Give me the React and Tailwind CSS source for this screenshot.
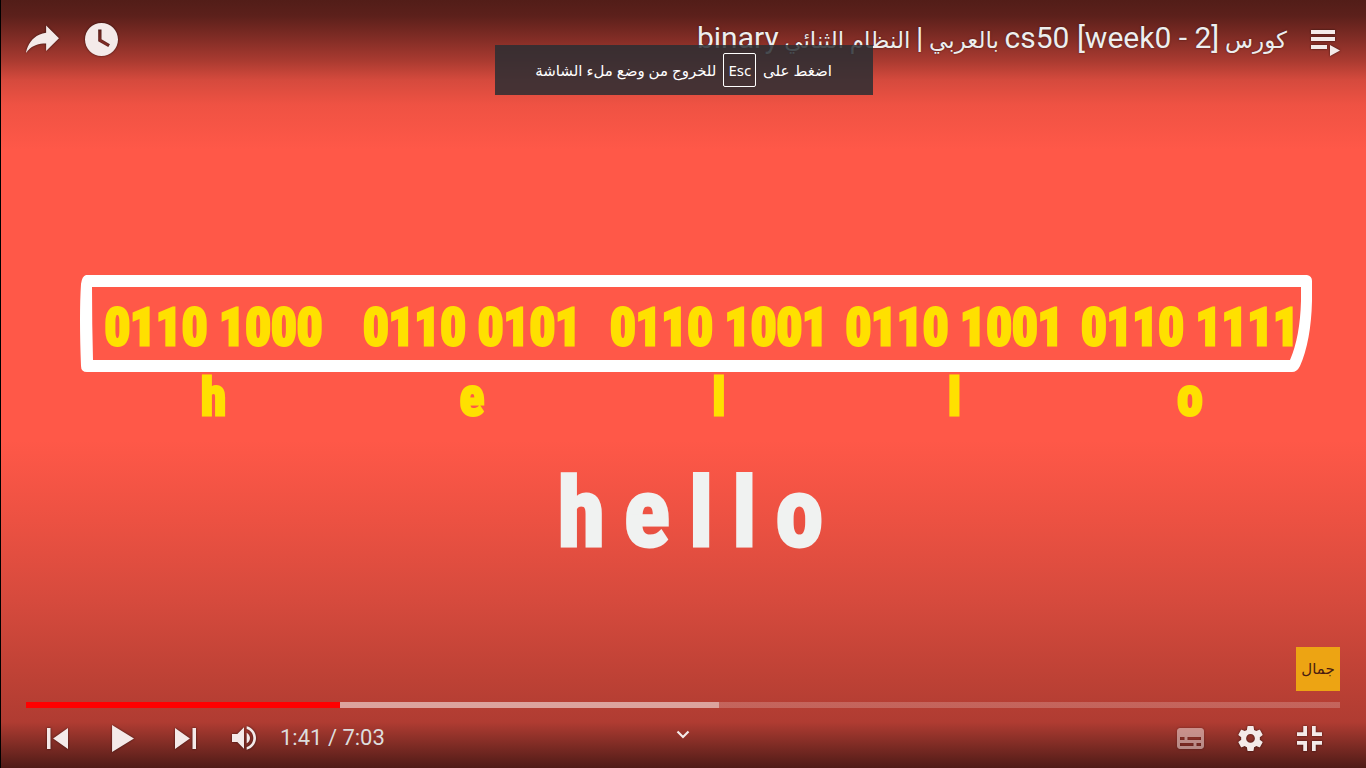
import React from "react";

const groups = [
  { code: "0110 1000", letter: "h" },
  { code: "0110 0101", letter: "e" },
  { code: "0110 1001", letter: "l" },
  { code: "0110 1001", letter: "l" },
  { code: "0110 1111", letter: "o" },
];

const player = { elapsed: 101, duration: 423, buffered: 223 };

const shadow = "drop-shadow-[0_0_1px_rgba(0,0,0,0.6)]";

function IconButton({ label, viewBox, className, children }) {
  return (
    <button type="button" aria-label={label} className="flex shrink-0 items-center justify-center">
      <svg viewBox={viewBox} className={`overflow-visible ${shadow} ${className}`} fill="#f4eae9" aria-hidden="true">
        {children}
      </svg>
    </button>
  );
}

function TopBar() {
  return (
    <header className="flex h-[78px] items-center justify-between pr-[26px] pl-[25px]">
      <div className="flex items-center gap-[26px]">
        <IconButton label="مشاركة" viewBox="8 9.5 20 17" className="h-7 w-[33px]">
          <path d="m 20.20,14.19 0,-4.45 7.79,7.79 -7.79,7.79 0,-4.56 C 16.27,20.69 12.10,21.81 9.34,24.76 8.80,25.13 7.60,27.29 8.12,25.65 9.08,21.32 11.80,17.18 15.98,15.38 c 1.33,-0.60 2.76,-0.98 4.21,-1.19 z" />
        </IconButton>
        <IconButton label="المشاهدة لاحقًا" viewBox="8 8 20 20" className="size-[33px]">
          <path d="M18,8 C12.47,8 8,12.47 8,18 C8,23.52 12.47,28 18,28 C23.52,28 28,23.52 28,18 C28,12.47 23.52,8 18,8 Z M16,19.02 L16,12 L18,12 L18,17.86 L23.10,20.81 L22.10,22.54 L16,19.02 Z" />
        </IconButton>
      </div>
      <div className="flex items-center gap-6">
        <h1 dir="rtl" className="font-[Roboto,'DejaVu_Sans',sans-serif] text-[23px] leading-[38px] whitespace-nowrap text-[#eeeeee] [text-shadow:0_0_2px_rgba(0,0,0,0.5)]">
          كورس <span className="text-[30px]">cs50 [week0 - 2]</span> بالعربي <span className="text-[30px]">|</span> النظام
          الثنائي <span className="text-[30px]">binary</span>
        </h1>
        <IconButton label="قائمة التشغيل" viewBox="0 0 29 26" className="mt-2 h-[26px] w-[29px]">
          <path d="M0 0h24v4H0z M0 7h24v4H0z M0 15h16v4H0z M19 15l10 5.500l-10 5.500z" />
        </IconButton>
      </div>
    </header>
  );
}

function FullscreenHint() {
  return (
    <div
      dir="rtl"
      className="absolute top-[45px] left-1/2 flex h-[50px] w-[378px] -translate-x-1/2 items-center justify-center gap-[7px] bg-[rgba(42,46,50,0.85)] font-['Noto_Sans','DejaVu_Sans',sans-serif] text-[15px] whitespace-nowrap text-white"
    >
      <span>اضغط على</span>
      <kbd className="flex h-[34px] items-center rounded-xs border border-white px-1 font-['Noto_Sans',sans-serif] text-[15px]">Esc</kbd>
      <span>للخروج من وضع ملء الشاشة</span>
    </div>
  );
}

function Scene() {
  return (
    <main className="flex-1 pt-[197px] font-['Roboto_Condensed','DejaVu_Sans_Condensed',sans-serif] font-bold">
      <div className="relative mr-[54px] ml-[79px]">
        <svg className="absolute top-0 left-0 h-[98px] w-full" viewBox="0 0 1232 98" preserveAspectRatio="none" aria-hidden="true">
          <path
            fillRule="evenodd"
            fill="#ffffff"
            d="M6 0 Q2 1 1 9 Q-1 40 1 91 Q1 97 7 97 H1212 Q1217 97 1220 91 Q1231 66 1232 26 V6 Q1232 1 1227 0 Z M12 12 H1221 V26 Q1220 62 1210 85 H13 Q12 50 12 12 Z"
          />
        </svg>
        <ul className="relative grid grid-cols-[267fr_250fr_244fr_227fr_244fr] text-[51px] leading-[70px] whitespace-nowrap text-[#ffe000] [-webkit-text-stroke:3px_#ffe000]">
          {groups.map((g, i) => (
            <li key={i} className="flex min-w-0 flex-col items-center pt-[18px]">
              <span>{g.code}</span>
              <span>{g.letter}</span>
            </li>
          ))}
        </ul>
      </div>
      <p aria-label="hello" className="mt-5 flex justify-center gap-[19px] pl-[14px] text-[96px] leading-[120px] text-[#f0f2f1] [-webkit-text-stroke:3px_#f0f2f1]">
        {"hello".split("").map((c, i) => (
          <span key={i}>{c}</span>
        ))}
      </p>
    </main>
  );
}

function Controls() {
  const played = (player.elapsed / player.duration) * 100;
  const loaded = (player.buffered / player.duration) * 100;
  return (
    <footer className="flex flex-col pr-[26px] pl-[25px]">
      <a href="#channel" aria-label="جمال" className="flex size-11 items-center justify-center self-end bg-[#eda413] font-['DejaVu_Sans',sans-serif] text-[15px] text-[#4a1c10]">
        جمال
      </a>
      <input
        type="range"
        aria-label="شريط التقدم"
        min="0"
        max={player.duration}
        defaultValue={player.elapsed}
        className="mt-[11px] block h-[6px] w-full appearance-none [&::-webkit-slider-thumb]:size-1 [&::-webkit-slider-thumb]:appearance-none [&::-webkit-slider-thumb]:opacity-0"
        style={{
          background: `linear-gradient(to right, #ff0000 ${played}%, rgba(255,255,255,0.52) ${played}% ${loaded}%, rgba(255,255,255,0.2) ${loaded}%)`,
        }}
      />
      <div className="grid h-[60px] grid-cols-[1fr_auto_1fr] items-center">
        <div className="flex items-center pl-[21px]">
          <IconButton label="السابق" viewBox="12 12 12 12" className="size-[21px]">
            <path d="m 12,12 h 2 v 12 h -2 z m 3.5,6 8.5,6 V 12 z" />
          </IconButton>
          <span className="w-11" />
          <IconButton label="تشغيل" viewBox="12 10 13 16" className="h-[27px] w-[22px]">
            <path d="M12,26 L25,18 L12,10 z" />
          </IconButton>
          <span className="w-[41px]" />
          <IconButton label="التالي" viewBox="12 12 12 12" className="size-[21px]">
            <path d="M 12,24 20.5,18 12,12 V 24 z M 22,12 v 12 h 2 V 12 h -2 z" />
          </IconButton>
          <span className="w-9" />
          <IconButton label="كتم الصوت" viewBox="8 9 18 18" className="size-6">
            <path d="M8,21 L12,21 L17,26 L17,10 L12,15 L8,15 L8,21 Z M19,14 L19,22 C20.48,21.32 21.5,19.77 21.5,18 C21.5,16.26 20.48,14.74 19,14 Z M19,11.29 C21.89,12.15 24,14.83 24,18 C24,21.17 21.89,23.85 19,24.71 L19,26.77 C23.01,25.86 26,22.28 26,18 C26,13.72 23.01,10.14 19,9.23 L19,11.29 Z" />
          </IconButton>
          <span className="ml-6 font-[Roboto,sans-serif] text-[22px] leading-7 text-[#dddddd]">1:41 / 7:03</span>
        </div>
        <button type="button" aria-label="المزيد" className="mb-2">
          <svg viewBox="0 0 14 9" className="h-[9px] w-[14px]" fill="none" stroke="#f4eae9" strokeWidth="2.2" aria-hidden="true">
            <path d="M1.500 1.500 L7 7 L12.500 1.500" />
          </svg>
        </button>
        <div className="flex items-center justify-end gap-[34px] pr-[18px]">
          <span className="flex opacity-50">
            <IconButton label="الترجمة" viewBox="9 11 18 14" className="h-[21px] w-[27px]">
              <path d="M11,11 C9.9,11 9,11.9 9,13 L9,23 C9,24.1 9.9,25 11,25 L25,25 C26.1,25 27,24.1 27,23 L27,13 C27,11.9 26.1,11 25,11 L11,11 Z M11,17 L14,17 L14,19 L11,19 Z M20,23 L11,23 L11,21 L20,21 Z M25,23 L22,23 L22,21 L25,21 Z M25,19 L16,19 L16,17 L25,17 Z" />
            </IconButton>
          </span>
          <IconButton label="الإعدادات" viewBox="10 10 16 16" className="size-[25px]">
            <path d="m 23.94,18.78 c .03,-0.25 .05,-0.51 .05,-0.78 0,-0.27 -0.02,-0.52 -0.05,-0.78 l 1.68,-1.32 c .15,-0.12 .19,-0.33 .09,-0.51 l -1.6,-2.76 c -0.09,-0.17 -0.31,-0.24 -0.48,-0.17 l -1.99,.8 c -0.41,-0.32 -0.86,-0.58 -1.35,-0.78 l -0.30,-2.12 c -0.02,-0.19 -0.19,-0.33 -0.39,-0.33 l -3.2,0 c -0.2,0 -0.36,.14 -0.39,.33 l -0.30,2.12 c -0.48,.2 -0.93,.47 -1.35,.78 l -1.99,-0.8 c -0.18,-0.07 -0.39,0 -0.48,.17 l -1.6,2.76 c -0.10,.17 -0.05,.39 .09,.51 l 1.68,1.32 c -0.03,.25 -0.05,.52 -0.05,.78 0,.26 .02,.52 .05,.78 l -1.68,1.32 c -0.15,.12 -0.19,.33 -0.09,.51 l 1.6,2.76 c .09,.17 .31,.24 .48,.17 l 1.99,-0.8 c .41,.32 .86,.58 1.35,.78 l .30,2.12 c .02,.19 .19,.33 .39,.33 l 3.2,0 c .2,0 .36,-0.14 .39,-0.33 l .30,-2.12 c .48,-0.2 .93,-0.47 1.35,-0.78 l 1.99,.8 c .18,.07 .39,0 .48,-0.17 l 1.6,-2.76 c .09,-0.17 .05,-0.39 -0.09,-0.51 l -1.68,-1.32 z m -5.94,2.01 c -1.54,0 -2.8,-1.25 -2.8,-2.8 0,-1.54 1.25,-2.8 2.8,-2.8 1.54,0 2.8,1.25 2.8,2.8 0,1.54 -1.25,2.8 -2.8,2.8 z" />
          </IconButton>
          <IconButton label="إنهاء ملء الشاشة" viewBox="10 10 16 16" className="size-[25px]">
            <path d="m 14,14 -4,0 0,2.400 6.400,0 0,-6.400 -2.400,0 0,4 z M 22,14 l 0,-4 -2.400,0 0,6.400 6.400,0 0,-2.400 z M 19.600,26 l 2.400,0 0,-4 4,0 0,-2.400 -6.400,0 z M 10,22 l 4,0 0,4 2.400,0 0,-6.400 -6.400,0 z" />
          </IconButton>
        </div>
      </div>
    </footer>
  );
}

export default function App() {
  return (
    <div
      dir="ltr"
      className="relative flex min-h-screen flex-col overflow-hidden border-l border-black bg-[linear-gradient(to_bottom,#521d18_0px,#5c201b_16px,#7d2b24_36px,#a83a30_60px,#d54a3d_80px,#ef5243_105px,#ff5848_150px,#ff5848_440px,#ec5142_520px,#d64a3d_600px,#bd4135_680px,#b03c32_722px,#7d2b24_746px,#4f1b17_768px)]"
    >
      <TopBar />
      <FullscreenHint />
      <Scene />
      <Controls />
    </div>
  );
}
